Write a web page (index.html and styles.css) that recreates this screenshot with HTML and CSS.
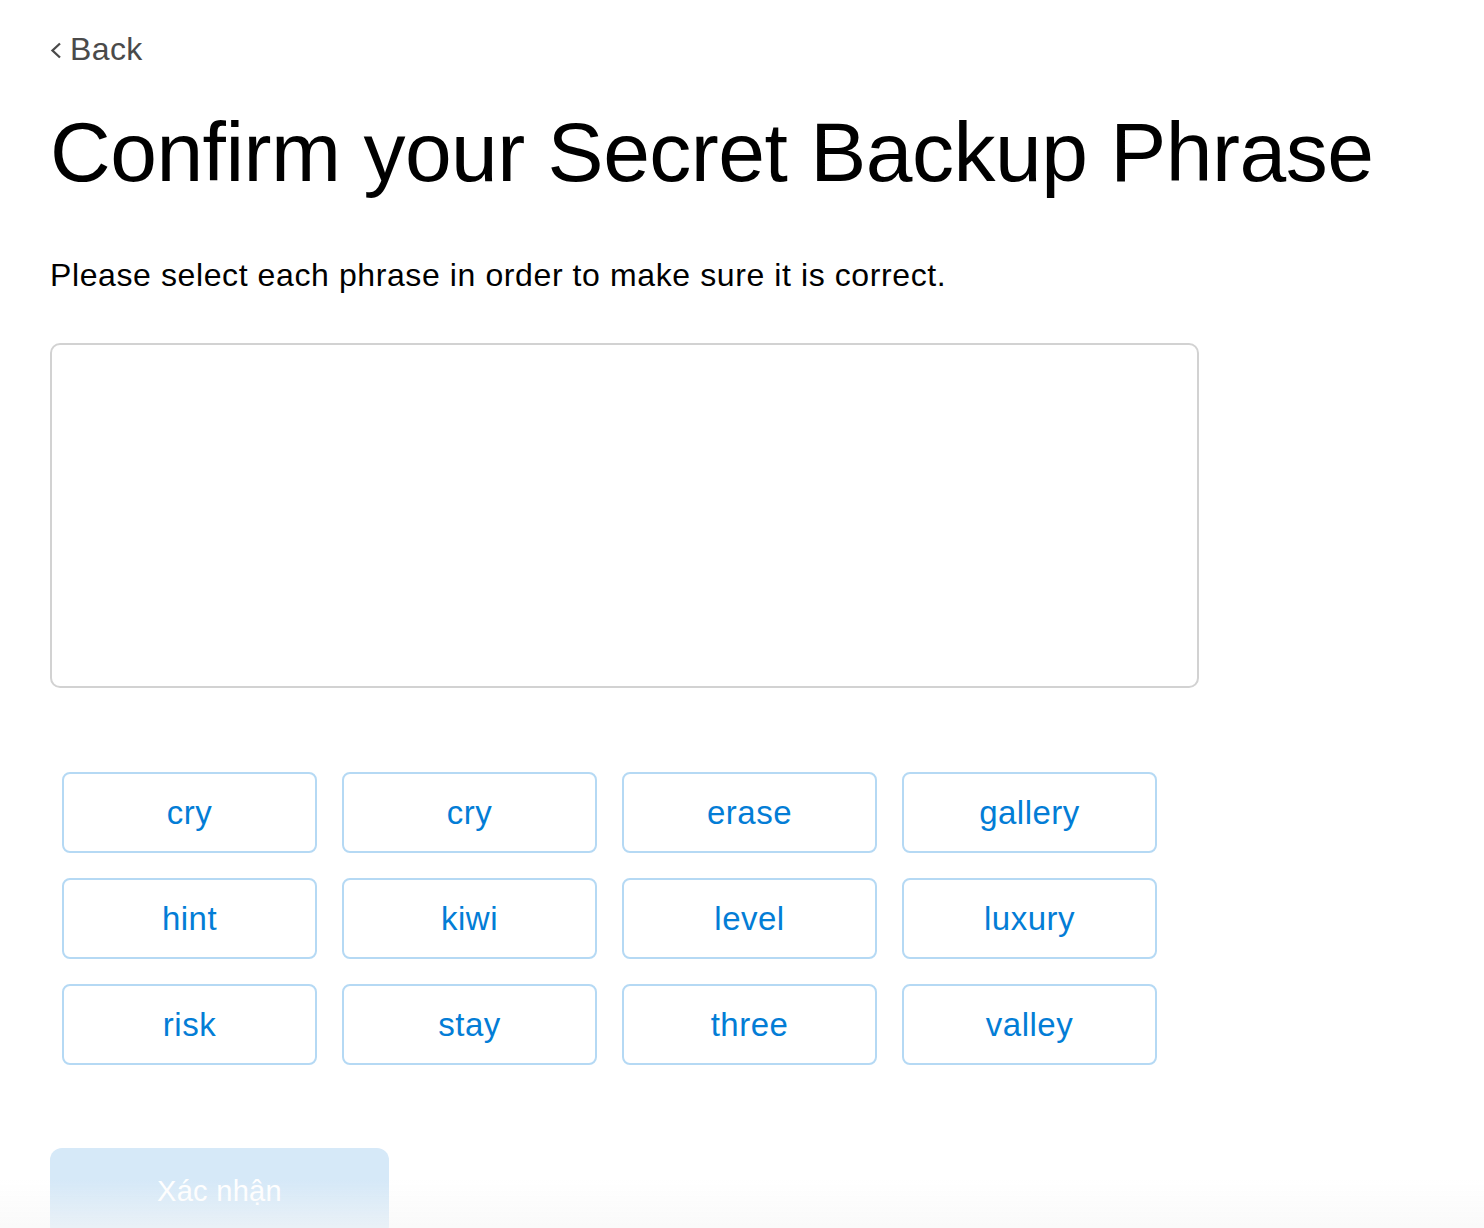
FILE: index.html
```html
<!DOCTYPE html>
<html lang="en">

<head>
    <meta charset="UTF-8">
    <meta name="viewport" content="width=device-width, initial-scale=1.0">
    <title>Confirm your Secret Backup Phrase</title>
    <link rel="stylesheet" href="styles.css">
</head>

<body>
    <div class="page">
        <a class="back" href="#">
            <svg class="back-icon" width="12" height="18" viewBox="0 0 12 18">
                <path d="M10 2.5 L2.5 9.5 L10 16.5" fill="none" stroke="#4a4a4a" stroke-width="2.3" />
            </svg>
            Back
        </a>

        <h1>Confirm your Secret Backup Phrase</h1>

        <p class="lead">Please select each phrase in order to make sure it is correct.</p>

        <!-- Kotak frasa yang dipilih -->
        <div class="selected-box"></div>

        <!-- Daftar kata -->
        <div class="word-grid">
            <button class="word">cry</button>
            <button class="word">cry</button>
            <button class="word">erase</button>
            <button class="word">gallery</button>
            <button class="word">hint</button>
            <button class="word">kiwi</button>
            <button class="word">level</button>
            <button class="word">luxury</button>
            <button class="word">risk</button>
            <button class="word">stay</button>
            <button class="word">three</button>
            <button class="word">valley</button>
        </div>

        <button class="confirm" disabled>Xác nhận</button>
    </div>

    <div class="bottom-fade"></div>
</body>

</html>
```

FILE: styles.css
```css
/* Styling Umum */

body {
    font-family: 'Liberation Sans', Arial, sans-serif;
    margin: 0;
    padding: 0;
    background-color: #fff;
    color: #000;
}

.page {
    padding: 30px 50px 0 50px;
}

.back {
    display: inline-flex;
    align-items: center;
    gap: 8px;
    font-size: 32px;
    line-height: 38px;
    letter-spacing: 0.4px;
    color: #4a4a4a;
    text-decoration: none;
}

.back-icon {
    margin-top: 2px;
}

h1 {
    font-size: 84px;
    font-weight: normal;
    line-height: 100px;
    margin: 34px 0 0 0;
    letter-spacing: -0.5px;
}

.lead {
    font-size: 32px;
    line-height: 36px;
    letter-spacing: 0.6px;
    margin: 55px 0 0 0;
}

.selected-box {
    width: 1145px;
    height: 341px;
    margin-top: 50px;
    border: 2px solid #d2d2d2;
    border-radius: 10px;
}

.word-grid {
    display: grid;
    grid-template-columns: repeat(4, 255px);
    grid-auto-rows: 81px;
    gap: 25px;
    margin: 84px 0 0 12px;
}

.word {
    font-family: inherit;
    font-size: 33px;
    letter-spacing: 0.5px;
    color: #037dd6;
    background-color: #fff;
    border: 2px solid #b5d9f4;
    border-radius: 8px;
    cursor: pointer;
    padding: 0;
}

.confirm {
    width: 339px;
    height: 90px;
    margin-top: 83px;
    font-family: inherit;
    font-size: 29px;
    letter-spacing: 0.3px;
    color: #fff;
    background-color: #d6e9f8;
    border: none;
    border-radius: 12px;
    padding-bottom: 4px;
}

.bottom-fade {
    position: fixed;
    left: 0;
    right: 0;
    bottom: 0;
    height: 48px;
    background: linear-gradient(to bottom, rgba(246, 246, 246, 0), rgba(246, 246, 246, 0.6));
    pointer-events: none;
}
```
